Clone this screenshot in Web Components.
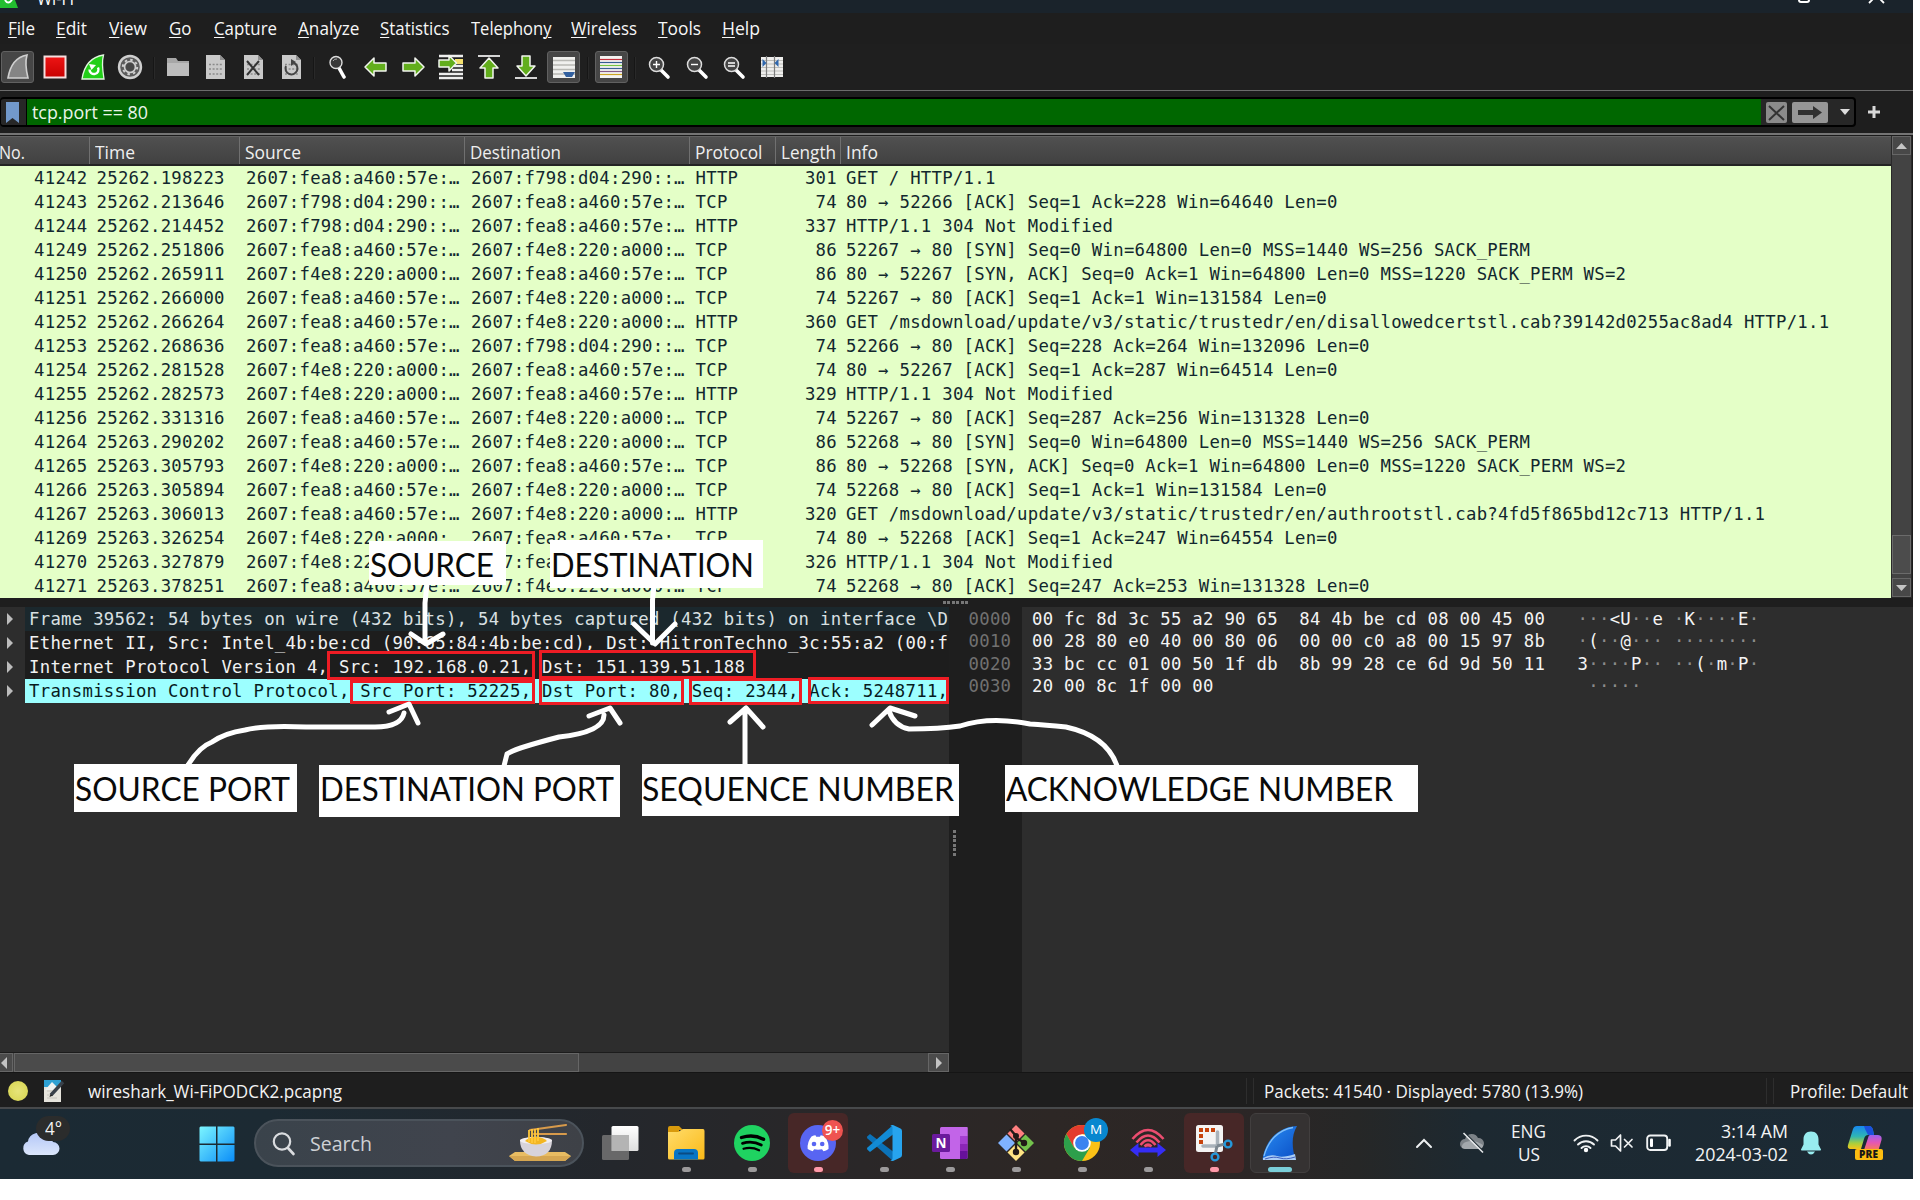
<!DOCTYPE html>
<html lang="en">
<head>
<meta charset="utf-8">
<title>Wi-Fi</title>
<style>
html,body{margin:0;padding:0;background:#fff}
body{width:1920px;height:1200px;overflow:hidden;font-family:"Open Sans","Noto Sans",sans-serif}
</style>
</head>
<body>
<ws-app></ws-app>
<script>
const define = (name, css, html, after) => customElements.define(name, class extends HTMLElement {
  connectedCallback() {
    if (this.shadowRoot) return;
    const root = this.attachShadow({mode: 'open'});
    const t = document.createElement('template');
    t.innerHTML = `<style>:host{display:block;box-sizing:border-box}*{box-sizing:border-box}${css}</style>` + (typeof html === 'function' ? html(this) : html);
    root.appendChild(t.content.cloneNode(true));
    if (after) after(this, root);
  }
});

/* Text squeezed or stretched horizontally to the width given in "w". */
define('fit-text', ':host{display:inline-block;white-space:nowrap;flex:none}span{display:inline-block;transform-origin:0 50%;white-space:pre}', '<span><slot></slot></span>', (el, root) => {
  const w = +el.getAttribute('w'), s = root.querySelector('span');
  el.style.width = w + 'px';
  const n = s.getBoundingClientRect().width;
  if (n) s.style.transform = `scaleX(${w / n})`;
});

const doc = inner => `<path d="M2 1h14l5 5v19H2z" fill="#c9c9c9"/><path d="M16 1v5h5z" fill="#909090"/><g fill="none" stroke="#8a8a8a" stroke-width="1.5" stroke-dasharray="2 1.6"><path d="M5 10.500h13M5 15h13M5 20h13"/></g>${inner}`;
const mag = s => `<path d="M14 15l7 7" stroke="#fff" stroke-width="3.600" stroke-linecap="round"/><circle cx="9.500" cy="9.500" r="7" fill="#454545" stroke="#dcdcdc" stroke-width="1.500"/><path d="${s}" stroke="#fff" stroke-width="1.400"/>`;
const GA = 'fill="#62ae1c" stroke="#f2f5ee" stroke-width="1.500" stroke-linejoin="round"';
const ICONS = {
  fin: [24,26,'<path d="M2 24C4 12 10 3 21 1c-2 7-1 15 1 23z" fill="#858585" stroke="#d0d0d0" stroke-width="1.600"/>'],
  stop: [24,24,'<defs><linearGradient id="r" x2="0" y2="1"><stop stop-color="#ee1515"/><stop offset="1" stop-color="#c80000"/></linearGradient></defs><rect x="1.500" y="1.500" width="21" height="21" fill="url(#r)" stroke="#f5dede" stroke-width="2"/>'],
  restart: [24,26,'<path d="M1 25C3 12 10 3 22.500 1c-2 7-1 15 .5 24z" fill="#22cf18" stroke="#e2f7df" stroke-width="1.300"/><path d="M8.500 15.500a4.500 4.500 0 1 0 8.500-2" fill="none" stroke="#fff" stroke-width="2.400"/><path d="M8 10l7 1-4.500 5z" fill="#fff"/>'],
  gear: [26,26,'<circle cx="13" cy="13" r="11" fill="#5c5c5c" stroke="#cfcfcf" stroke-width="2.400"/><circle cx="13" cy="13" r="5.500" fill="none" stroke="#cfcfcf" stroke-width="1.600"/><circle cx="13" cy="13" r="7.200" fill="none" stroke="#cfcfcf" stroke-width="2" stroke-dasharray="2.500 3.150"/><circle cx="13" cy="13" r="4" fill="#474747"/>'],
  folder: [24,20,'<path d="M1 1h9l2 3h11v15H1z" fill="#a7a7a7"/><path d="M1 6h22v13H1z" fill="#bdbdbd"/>'],
  doc: [22,26,doc('')],
  docx: [22,26,doc('<path d="M5 7l12 14M17 7L5 21" stroke="#333" stroke-width="2"/>')],
  docr: [22,26,doc('<path d="M6 12a6 6 0 1 0 8-3" fill="none" stroke="#444" stroke-width="2"/><path d="M11 5l5 3-5 4z" fill="#444"/>')],
  find: [20,25,'<path d="M11 13l5 9" stroke="#fff" stroke-width="3.600" stroke-linecap="round"/><circle cx="8" cy="7.500" r="6" fill="#383838" stroke="#ddd" stroke-width="1.400"/><path d="M5 6a4 4 0 0 1 4-2" stroke="#aaa" fill="none"/>'],
  left: [24,20,`<path d="M1 10L10 1v5h12v8H10v5z" ${GA}/>`],
  right: [24,20,`<path d="M23 10L14 1v5H2v8h12v5z" ${GA}/>`],
  goto: [26,26,`<path d="M1 2h24M1 20h24M1 24h24M14 16h11M16 12h9" stroke="#eee" stroke-width="2.400"/><path d="M17 5h8v5h-8z" fill="#f5e16e"/><path d="M18.500 9L11 1.500V6H1v7h10v4z" ${GA}/>`],
  up: [24,26,`<path d="M1 2h22" stroke="#d5d5d5" stroke-width="2"/><path d="M12 4l9 10h-5v10H8V14H3z" ${GA}/>`],
  down: [24,26,`<path d="M1 24h22" stroke="#d5d5d5" stroke-width="2"/><path d="M12 22l9-10h-5V2H8v10H3z" ${GA}/>`],
  scroll: [24,24,'<path d="M1 2h22v21H1z" fill="#f0f0ee"/><path d="M1 5.500h22M1 10h22M1 14.500h22M1 19h22" stroke="#b8b8b4" stroke-width="1.300"/><path d="M11 17h12l-3 5h-6z" fill="#32609f"/>'],
  color: [24,24,'<path d="M1 1h22v22H1z" fill="#f4f4f2"/><g stroke-width="1.200"><path d="M1 4.500h22" stroke="#c22f3c"/><path d="M1 7.500h22" stroke="#345b91"/><path d="M1 10.500h22" stroke="#76c442"/><path d="M1 13.500h22" stroke="#3b5f94"/><path d="M1 16.500h22" stroke="#855b87"/><path d="M1 19.500h22" stroke="#cda522"/></g>'],
  zin: [24,24,mag('M6 9.500h7M9.500 6v7')], zout: [24,24,mag('M6 9.500h7')], zeq: [24,24,mag('M6 8h7M6 11h7')],
  cols: [24,24,'<path d="M1 2h22v20H1z" fill="#eeeeec"/><path d="M1 5.500h22M1 9h22M1 12.500h22M1 16h22M1 19.500h22" stroke="#bebeba"/><path d="M6.500 1v22M14.500 1v22" stroke="#7d7d7d" stroke-width="1.200"/><path d="M2.500 4l4 4-4 4zM18.500 4l-4 4 4 4z" fill="#2f67ad"/>'],

  win: [36,36,'<defs><linearGradient id="w" x2="1" y2="1"><stop stop-color="#7cf6ff"/><stop offset="1" stop-color="#0a8df8"/></linearGradient></defs><path d="M1.500 .5H17v17H.5V1.500zM18.500 .5h16l1 1v16h-17zM.5 19H17v16.500H1.500l-1-1zM18.500 19h17v15.500l-1 1h-16z" fill="url(#w)"/>'],
  taskview: [38,36,'<defs><linearGradient id="t" x2="0" y2="1"><stop stop-color="#fff"/><stop offset="1" stop-color="#dedede"/></linearGradient></defs><rect x="10.500" y="1" width="27" height="25" rx="1.500" fill="url(#t)"/><rect x="1" y="10" width="27" height="25" rx="1.500" fill="#747474" opacity=".85"/><path d="M10.500 10H28v16H10.500z" fill="#b4b4b4"/>'],
  files: [38,36,'<defs><linearGradient id="f" x2="1" y2="1"><stop stop-color="#ffdc6b"/><stop offset="1" stop-color="#fbb917"/></linearGradient></defs><path d="M1 3q0-2 2-2h9l4 4h-4v5H1z" fill="#d99a0c"/><path d="M1 7h10l5-3h20q1.500 0 1.500 2v27q0 1.500-1.500 1.500H2.500Q1 34.500 1 33z" fill="url(#f)"/><path d="M7 34.500V28q0-4 4-4h16q4 0 4 4v6.500z" fill="#0875c5"/><path d="M12 28.500h14" stroke="#0a4b83" stroke-width="1.800" stroke-linecap="round"/>'],
  spotify: [36,36,'<circle cx="18" cy="18" r="18" fill="#1fd361"/><g fill="none" stroke="#000" stroke-linecap="round"><path d="M7.500 12.500q12-3.800 22 1.800" stroke-width="3.400"/><path d="M8.500 18.300q10-3 18.800 1.800" stroke-width="2.800"/><path d="M9.500 23.800q8-2.300 15.600 1.500" stroke-width="2.200"/></g>'],
  discord: [36,36,'<circle cx="18" cy="18" r="18" fill="#5865f2"/><path d="M11.500 11.500Q14 10.300 15.500 10.300L16.200 11.700H20L20.700 10.300Q23 10.500 25 11.600Q29 17.500 28.500 24Q26 25.700 23.500 26.300L22 24.200Q18 25.100 14.200 24.200L12.700 26.300Q10 25.600 7.700 24Q7 17 11.500 11.500z" fill="#fff"/><circle cx="14" cy="19" r="2.300" fill="#5865f2"/><circle cx="22.200" cy="19" r="2.300" fill="#5865f2"/>'],
  vscode: [36,36,'<path d="M1.500 11.200L4 9l23 17.500V36L1.500 13.500q-1.200-1.200 0-2.300z" fill="#0b72b8"/><path d="M1.500 24.800L4 27l23-17.500V0L1.500 22.500q-1.200 1.200 0 2.300z" fill="#128bd5"/><path d="M27 0l7.500 3.500Q36 4.200 36 6v24q0 1.800-1.500 2.500L27 36q-1.500.3-3-1.200 2 1 2.500-1.300V2.500Q26 .2 24 1.200 25.500-.3 27 0z" fill="#27a4ee"/>'],
  onenote: [36,34,'<rect x="8" y="1" width="27.500" height="32" rx="1.500" fill="#c264e8"/><path d="M28 1h7.500v9H28z" fill="#c46ae9"/><path d="M28 10h7.500v8H28z" fill="#a53fd0"/><path d="M28 18h7.500v7H28z" fill="#8b26b7"/><path d="M28 25h7.500v6.500q0 1.500-1.500 1.500h-6z" fill="#66119a"/><rect x="0" y="8" width="18" height="18" rx="1.500" fill="#6b1a9d"/><text x="9" y="22" text-anchor="middle" font-family="Open Sans" font-weight="700" font-size="13.500" fill="#fff">N</text>'],
  git: [38,38,'<path d="M19 1l8.500 8.500L19 18l-8.500-8.500z" fill="#ff8080"/><path d="M9.500 10.500L18 19l-8.500 8.500L1 19z" fill="#7fb2ff"/><path d="M28.500 10.500L37 19l-8.500 8.500L20 19z" fill="#73c24c"/><path d="M19 20l8.500 8.500L19 37l-8.500-8.500z" fill="#ffe484"/><path d="M13 5l6 7v16M19 14l9 5" stroke="#221a18" stroke-width="2.400" fill="none"/><g fill="#221a18"><circle cx="19" cy="12" r="3"/><circle cx="27" cy="19" r="3.200"/><circle cx="19" cy="28" r="3.200"/></g>'],
  chrome: [36,36,'<circle cx="18" cy="18" r="18" fill="#fbc116"/><path d="M2.400 9A18 18 0 0 1 33.600 9H18L10 22.500z" fill="#e33b2e"/><path d="M2.400 9A18 18 0 0 0 18 36l8-13.500H10z" fill="#2d9f4b"/><circle cx="18" cy="18" r="8.800" fill="#fff"/><circle cx="18" cy="18" r="6.900" fill="#3b83f0"/>'],
  cast: [36,28,'<g fill="none" stroke="#ec4d70" stroke-width="2.600"><path d="M2.500 10q15.500-18 31 0"/><path d="M6.500 13.500q11.500-14 23 0"/><path d="M10.500 16q7.500-9.500 15 0"/><path d="M14.500 17.500q3.500-3.500 7 0" fill="#ec4d70"/></g><path d="M0 21l8.500-7v4.500h19V14l8.500 7-8.500 7v-4.500h-19V28z" fill="#352df5"/>'],
  snip: [38,38,'<rect x="1" y="1" width="27" height="27" rx="2.500" fill="#f4f4f4"/><g fill="#c7430c"><path d="M4 4h4v4H4zM10 4h4v4h-4zM16 4h4v4h-4zM4 10h4v4H4zM4 16h4v4H4z"/></g><path d="M22.500 8v14M8 22h14" stroke="#a9b2ba" stroke-width="3.500" stroke-linecap="round"/><path d="M22 22l8-2M22 22l-1.500 7" stroke="#7c8790" stroke-width="3"/><circle cx="33" cy="20" r="3.400" fill="none" stroke="#2598da" stroke-width="2.400"/><circle cx="20" cy="33" r="3.400" fill="none" stroke="#2598da" stroke-width="2.400"/>'],
  shark: [36,36,'<defs><linearGradient id="s" x2="1" y2="1"><stop stop-color="#2a8df3"/><stop offset="1" stop-color="#0a4fc6"/></linearGradient></defs><path d="M.5 34.500C3 18 14 2 35 1c-6 10-5 22-1.500 34z" fill="url(#s)"/><path d="M2 31C6 16 16 5 31 2.500" stroke="#7fc0fa" stroke-width="1.300" fill="none"/><path d="M1 33q8-4 14-2t18-2l1 6H1z" fill="#a9cdf6"/><path d="M3 34q9-3 15-1t15-1" stroke="#3d5fc0" fill="none"/>'],

  weather: [38,26,'<defs><linearGradient id="c" x2="0" y2="1"><stop stop-color="#b4c7f7"/><stop offset="1" stop-color="#dbe6fb"/></linearGradient></defs><path d="M7 24a7 7 0 0 1-1-13.500A10 10 0 0 1 24 6a8 8 0 0 1 7 5 6.500 6.500 0 0 1 0 13z" fill="url(#c)"/>'],
  search: [24,24,'<circle cx="10" cy="10.500" r="8.200" fill="none" stroke="#dadcdf" stroke-width="2.200"/><path d="M16 17l5.500 6" stroke="#dadcdf" stroke-width="2.600" stroke-linecap="round"/>'],
  bowl: [64,38,'<path d="M7 28h50l6 4-6 5H7l-6-5z" fill="#e8bc62"/><path d="M1 32h62l-6 5H7z" fill="#d5a651"/><path d="M22 6L58 1M26 10h32" stroke="#d79a4b" stroke-width="2.200" stroke-linecap="round"/><path d="M12 16q16-7 32 0 0 16-16 16.500Q12 31 12 16z" fill="#d7d3da"/><ellipse cx="28" cy="16.500" rx="16" ry="3.500" fill="#f1eef1"/><path d="M17 17q11 7 22 0-4-4-11-4t-11 4z" fill="#f3b623"/><path d="M21 6v12M24 5v14M27 5v14M30 4v13" stroke="#ffc83a" stroke-width="1.800"/>'],
  chev: [18,12,'<path d="M2 10l7-7 7 7" fill="none" stroke="#eef0f2" stroke-width="2" stroke-linecap="round"/>'],
  cloudoff: [26,22,'<path d="M6 17a5 5 0 0 1 0-10 7 7 0 0 1 13-1 5.500 5.500 0 0 1 1 11z" fill="#7d8388"/><path d="M3 16a5 5 0 0 1 4-6q8-3 17 3 0 4-4 4H6z" fill="#a3a8ac"/><path d="M5.500 .5l19.500 19.500" stroke="#1d2930" stroke-width="1.500"/><path d="M4.500 1l19.500 19.500" stroke="#e6e8ea" stroke-width="1.600"/>'],
  wifi: [26,20,'<g fill="none" stroke="#f0f2f3" stroke-width="1.900" stroke-linecap="round"><path d="M1.500 7.500a16 16 0 0 1 23 0"/><path d="M5 11.500a11.300 11.300 0 0 1 16 0"/><path d="M8.500 15a6.300 6.300 0 0 1 9 0"/></g><circle cx="13" cy="17" r="2.200" fill="#fff"/>'],
  mute: [24,20,'<path d="M1.500 7h4l5-5v16l-5-5h-4z" fill="none" stroke="#f0f2f3" stroke-width="1.700" stroke-linejoin="round"/><path d="M14.500 6.500l7.500 7.500M22 6.500L14.500 14" stroke="#f0f2f3" stroke-width="1.700" stroke-linecap="round"/>'],
  batt: [26,18,'<rect x="1.200" y="1.500" width="20" height="14.500" rx="3" fill="none" stroke="#f0f2f3" stroke-width="1.900"/><rect x="4" y="4.500" width="3" height="8.500" rx="1" fill="#fff"/><path d="M23.500 6v5.500" stroke="#fff" stroke-width="2.600" stroke-linecap="round"/>'],
  bell: [22,24,'<path d="M11 .5c5 0 7.500 3.500 7.500 8v5l2.500 5q.4 1-1 1H2q-1.400 0-1-1l2.500-5v-5c0-4.500 2.500-8 7.500-8z" fill="#98ecef"/><path d="M7 20.500h8q-1.500 3-4 3t-4-3z" fill="#98ecef"/>'],
  copilot: [36,36,'<defs><linearGradient id="a" x2="0" y2="1"><stop stop-color="#1787ef"/><stop offset=".45" stop-color="#2fb6b4"/><stop offset=".75" stop-color="#a8cf3e"/><stop offset="1" stop-color="#f5c518"/></linearGradient><linearGradient id="b" x2="0" y2="1"><stop stop-color="#9a62f0"/><stop offset=".5" stop-color="#e456b4"/><stop offset="1" stop-color="#fb7a54"/></linearGradient></defs><path d="M10 1h12q3 0 4 4l1 5h-6q-3 0-4 4l-3 10H3q-3-.5-2-4L6 4q1-3 4-3z" fill="url(#a)"/><path d="M17 1h5q3 0 4 4l1 5h-6l-3-6z" fill="#1b50dc"/><path d="M23 10h8q4.500.5 3.500 5l-3 10H17l4-12q.5-3 2-3z" fill="url(#b)"/>'],
  capfile: [22,24,'<path d="M1 3h17v20H1z" fill="#e6e4dc"/><path d="M1 1h17v7H1z" fill="#2ea1d4"/><path d="M2 11l7-8 8 8z" fill="#eef2f2"/><path d="M4 12h8M4 16h6M4 19h10" stroke="#c6c4bc"/><path d="M8 16L20 3" stroke="#39414a" stroke-width="3.400"/><path d="M6.500 18l1-3 2 1.800z" fill="#222"/>']
};
define('ws-icon', ':host{display:block;flex:none;line-height:0}svg{display:block;overflow:visible}', el => {
  const [w, h, s] = ICONS[el.getAttribute('name')];
  return `<svg width="${w}" height="${h}" viewBox="0 0 ${w} ${h}">${s}</svg>`;
});

define('title-bar', ':host{height:13px;overflow:hidden;background:#1a232b;position:relative;color:#fff;font-size:18px;line-height:20px}.i,.t,.m,.x{position:absolute}.i{left:0;top:0}.t{left:28px;top:-12px}.m{left:1798px;top:-10px;width:12px;height:13px;border:2px solid #fff;border-radius:3px}.x{left:1868px;top:-13px}',
 '<svg class="i" width="20" height="9"><path d="M0 0h15l3 8H0z" fill="#22bd2f"/><path d="M5 0q3 5 7 0" stroke="#fff" stroke-width="2" fill="none"/></svg><div class="t"><fit-text w="46">*Wi-Fi</fit-text></div><div class="m"></div><svg class="x" width="17" height="17"><path d="M1 1l15 15M16 1L1 16" stroke="#fff" stroke-width="1.800"/></svg>');

define('menu-bar', ':host{display:flex;height:31px;align-items:center;padding-left:8px;background:#1e1e1e;color:#f7f7f7;font-size:17.5px;line-height:31px}u{text-underline-offset:2px;text-decoration-thickness:1px}div{flex:none}', () => {
  const m = [['<u>F</u>ile',27,48],['<u>E</u>dit',31,53],['<u>V</u>iew',38,60],['<u>G</u>o',22.500,44.500],['<u>C</u>apture',63,84],['<u>A</u>nalyze',61.500,82.500],['<u>S</u>tatistics',69.500,90.500],['Telephon<u>y</u>',80.500,100.500],['<u>W</u>ireless',66,87],['<u>T</u>ools',43,63.500],['<u>H</u>elp',38,60]];
  return m.map(a => `<div style="width:${a[2]}px"><fit-text w="${a[1]}">${a[0]}</fit-text></div>`).join('');
});

define('tool-button', ':host{display:flex;width:37.600px;height:34px;flex:none;justify-content:center}div{width:33px;height:32px;display:flex;align-items:center;justify-content:center;border:1px solid transparent;border-radius:3px}:host([on]) div{background:#464646;border-color:#616161}', el => `<div><ws-icon name="${el.getAttribute('icon')}"></ws-icon></div>`);
define('tool-bar', ':host{display:flex;height:46px;align-items:center;padding:2px 0 0 0;background:#1f1f1f}tool-button:first-of-type{margin-left:-1.300px}i{width:10px;height:22px;flex:none;background:linear-gradient(90deg,transparent 4px,#161616 4px,#161616 5px,#292929 5px,#292929 6px,transparent 6px)}',
 () => ['fin!','stop','restart','gear','|','folder','doc','docx','docr','|','find','left','right','goto','up','down','scroll!','|','color!','|','zin','zout','zeq','cols'].map(n => n === '|' ? '<i></i>' : `<tool-button icon="${n.replace('!','')}"${n.endsWith('!') ? ' on' : ''}></tool-button>`).join(''));

define('filter-bar', `:host{display:flex;height:45px;padding:6px 0 5px;background:#1e1e1e;border-top:1px solid #6c6c6c;border-bottom:2px solid #747474}
.f{width:1856px;height:30px;border:2px solid #000;border-left-width:1px;border-radius:4px;display:flex;background:#272727}.b{width:26px;padding:3px 0 0 5px;border-right:1px solid #000}.g{width:1734px;background:#006700;color:#eaf4ea;font-size:17.500px;line-height:26px;padding-left:5px}.e{display:flex;align-items:center;gap:5px;padding-left:5px}.s{width:21px;height:21px;border-radius:2px;background:#8b8b8b}.a{width:36px;height:21px;border-radius:2px;background:#969696}svg{display:block}.p{padding:9px 0 0 12px}.c{margin-left:7px}`,
 '<div class="f"><div class="b"><svg width="14" height="21"><path d="M0 0h13v21l-6.500-5L0 21z" fill="#7299cb"/></svg></div><div class="g"><fit-text w="116">tcp.port == 80</fit-text></div><div class="e"><div class="s"><svg width="21" height="21"><path d="M3 4l15 14M18 4L3 18" stroke="#333" stroke-width="2"/></svg></div><div class="a"><svg width="36" height="21"><path d="M6 8h15V4l9 6.500-9 6.500v-4H6z" fill="#303030"/></svg></div><svg class="c" width="10" height="6"><path d="M0 0h10L5 6z" fill="#ddd"/></svg></div></div><div class="p"><svg width="12" height="12"><path d="M6 0v12M0 6h12" stroke="#d8d8d8" stroke-width="3"/></svg></div>');

const A = '2607:fea8:a460:57e:…', B = '2607:f798:d04:290::…', C = '2607:f4e8:220:a000:…';
const PACKETS = [
 [41242,'25262.198223',A,B,'HTTP',301,'GET / HTTP/1.1'],
 [41243,'25262.213646',B,A,'TCP',74,'80 → 52266 [ACK] Seq=1 Ack=228 Win=64640 Len=0'],
 [41244,'25262.214452',B,A,'HTTP',337,'HTTP/1.1 304 Not Modified'],
 [41249,'25262.251806',A,C,'TCP',86,'52267 → 80 [SYN] Seq=0 Win=64800 Len=0 MSS=1440 WS=256 SACK_PERM'],
 [41250,'25262.265911',C,A,'TCP',86,'80 → 52267 [SYN, ACK] Seq=0 Ack=1 Win=64800 Len=0 MSS=1220 SACK_PERM WS=2'],
 [41251,'25262.266000',A,C,'TCP',74,'52267 → 80 [ACK] Seq=1 Ack=1 Win=131584 Len=0'],
 [41252,'25262.266264',A,C,'HTTP',360,'GET /msdownload/update/v3/static/trustedr/en/disallowedcertstl.cab?39142d0255ac8ad4 HTTP/1.1'],
 [41253,'25262.268636',A,B,'TCP',74,'52266 → 80 [ACK] Seq=228 Ack=264 Win=132096 Len=0'],
 [41254,'25262.281528',C,A,'TCP',74,'80 → 52267 [ACK] Seq=1 Ack=287 Win=64514 Len=0'],
 [41255,'25262.282573',C,A,'HTTP',329,'HTTP/1.1 304 Not Modified'],
 [41256,'25262.331316',A,C,'TCP',74,'52267 → 80 [ACK] Seq=287 Ack=256 Win=131328 Len=0'],
 [41264,'25263.290202',A,C,'TCP',86,'52268 → 80 [SYN] Seq=0 Win=64800 Len=0 MSS=1440 WS=256 SACK_PERM'],
 [41265,'25263.305793',C,A,'TCP',86,'80 → 52268 [SYN, ACK] Seq=0 Ack=1 Win=64800 Len=0 MSS=1220 SACK_PERM WS=2'],
 [41266,'25263.305894',A,C,'TCP',74,'52268 → 80 [ACK] Seq=1 Ack=1 Win=131584 Len=0'],
 [41267,'25263.306013',A,C,'HTTP',320,'GET /msdownload/update/v3/static/trustedr/en/authrootstl.cab?4fd5f865bd12c713 HTTP/1.1'],
 [41269,'25263.326254',C,A,'TCP',74,'80 → 52268 [ACK] Seq=1 Ack=247 Win=64554 Len=0'],
 [41270,'25263.327879',C,A,'HTTP',326,'HTTP/1.1 304 Not Modified'],
 [41271,'25263.378251',A,C,'TCP',74,'52268 → 80 [ACK] Seq=247 Ack=253 Win=131328 Len=0']];
const MONO = 'font-family:"DejaVu Sans Mono","Liberation Mono",monospace;font-size:17.300px;letter-spacing:.285px;white-space:pre;';
const GRID = 'display:grid;grid-template-columns:87.500px 9px 149.500px 225px 224.500px 85.500px 56px 9px 1fr;';

define('packet-row', `:host{${GRID}height:24px;line-height:24px;overflow:hidden}.r{text-align:right}`, el => {
  const p = PACKETS[+el.getAttribute('index')];
  return `<span class="r">${p[0]}</span><span></span><span>${p[1]}</span><span>${p[2]}</span><span>${p[3]}</span><span>${p[4]}</span><span class="r">${p[5]}</span><span></span><span>${p[6]}</span>`;
});
define('packet-list', `:host{display:flex;height:463px;background:#1b1b1b;padding-top:1px}.l{width:1891px}.h{display:flex;height:30px;background:linear-gradient(#505050,#414141);border-top:1px solid #626262;border-bottom:2px solid #242424;color:#efefef;font-size:17.500px;line-height:30px}.h div{border-right:1px solid #707070;padding-left:5px;flex:none}.h div:last-child{border:0}.h div:first-child{padding:0}
.rows{background:#e4ffc7;color:#12272e;${MONO}}.s{width:21px;background:#434343;border:1px solid #2a2a2a;border-top:0;display:flex;flex-direction:column;align-items:center}.b{width:19px;height:19px;border:1px solid #666;background:#484848;display:flex;align-items:center;justify-content:center}.k{height:380px}.t{width:19px;height:39px;background:#4c4c4c;border:1px solid #6b6b6b;margin-bottom:auto}`,
 () => '<div class="l"><div class="h">' + [['No.',26,90],['Time',40,149.500],['Source',56,225],['Destination',91,225.500],['Protocol',67.500,85.500],['Length',55,65.500],['Info',32,400]].map((c,i) => `<div style="width:${c[2]}px"><fit-text w="${c[1]}"${i ? '' : ' style="margin-left:-1px"'}>${c[0]}</fit-text></div>`).join('') + '</div><div class="rows">' + PACKETS.map((_, i) => `<packet-row index="${i}"></packet-row>`).join('') + '</div></div><div class="s"><div class="b"><svg width="11" height="6"><path d="M0 6h11L5.500 0z" fill="#c4c4c4"/></svg></div><div class="k"></div><div class="t"></div><div class="b"><svg width="11" height="6"><path d="M0 0h11L5.500 6z" fill="#c4c4c4"/></svg></div></div>');

define('detail-row', `:host{display:flex;height:24px;color:#f2f2f2;${MONO}line-height:24px}.a{width:25px;flex:none;padding:6px 0 0 7px;background:#2d2d2d}.t{flex:1;background:#1d1d1d;padding-left:4px;overflow:hidden}:host([kind=frame]) .t{background:#1b282d;color:#d9e0e2}:host([kind=sel]) .t{background:#9cffff;color:#071c1e}svg{display:block}`,
 '<div class="a"><svg width="7" height="12"><path d="M0 0l6 6-6 6z" fill="#bcbcbc"/></svg></div><div class="t"><slot></slot></div>');
define('detail-tree', ':host{width:949px;height:465px;background:#2d2d2d;display:flex;flex-direction:column}.sb{margin-top:auto;height:20px;display:flex;background:#434343;border-top:1px solid #1c1c1c}.sb div{border:1px solid #666;background:#4b4b4b;display:flex;align-items:center}.l{width:13px;margin-right:1px;border-left:0!important;padding-left:1px}.th{width:565px}.r{width:21px;margin-left:auto;justify-content:center}',
 '<detail-row kind="frame">Frame 39562: 54 bytes on wire (432 bits), 54 bytes captured (432 bits) on interface \\D</detail-row><detail-row>Ethernet II, Src: Intel_4b:be:cd (90:65:84:4b:be:cd), Dst: HitronTechno_3c:55:a2 (00:f</detail-row><detail-row>Internet Protocol Version 4, Src: 192.168.0.21, Dst: 151.139.51.188</detail-row><detail-row kind="sel">Transmission Control Protocol, Src Port: 52225, Dst Port: 80, Seq: 2344, Ack: 5248711,</detail-row><div class="sb"><div class="l"><svg width="6" height="12"><path d="M6 0v12L0 6z" fill="#c4c4c4"/></svg></div><div class="th"></div><div class="r"><svg width="6" height="12"><path d="M0 0v12l6-6z" fill="#c4c4c4"/></svg></div></div>');

define('hex-view', `:host{display:flex;flex:1;height:465px;${MONO}line-height:22.300px;color:#f4f4f4}.o{width:66px;background:#1e1e1e;color:#717171;padding:1px 0 0 12.500px}.d{flex:1;background:#2d2d2d;padding:1px 0 0 10px;display:flex;gap:32px}.b{width:513.600px}i{font-style:normal;color:#8b8b8b}`, () => {
  const a = ['···<U··e ·K····E·','·(··@··· ········','3····P·· ··(·m·P·',' ·····'].map(s => s.replace(/</g,'&lt;').replace(/·+/g, m => `<i>${m}</i>`));
  return `<div class="o"><div>0000</div><div>0010</div><div>0020</div><div>0030</div></div><div class="d"><div class="b"><div>00 fc 8d 3c 55 a2 90 65  84 4b be cd 08 00 45 00</div><div>00 28 80 e0 40 00 80 06  00 00 c0 a8 00 15 97 8b</div><div>33 bc cc 01 00 50 1f db  8b 99 28 ce 6d 9d 50 11</div><div>20 00 8c 1f 00 00</div></div><div>${a.map(s => `<div>${s}</div>`).join('')}</div></div>`;
});
define('split-panes', ':host{display:flex;flex-direction:column;height:474px;background:#1e1e1e}.h{height:9px;padding:3px 0 0 943px}.h i{display:block;width:27px;height:3px;background:repeating-linear-gradient(90deg,#777 0 3px,transparent 3px 4.500px)}.p{display:flex}.v{width:7px;padding:223px 0 0 4px}.v i{display:block;width:3px;height:27px;background:repeating-linear-gradient(#777 0 3px,transparent 3px 4.500px)}',
 '<div class="h"><i></i></div><div class="p"><detail-tree></detail-tree><div class="v"><i></i></div><hex-view></hex-view></div>');

define('status-bar', ':host{display:flex;height:37px;align-items:center;background:#1e1e1e;border-bottom:2px solid #47494b;border-top:1px solid #151515;color:#f3f3f3;font-size:17.500px;line-height:34px;padding:1px 0 0 8px}.y{width:20px;height:20px;border-radius:50%;background:radial-gradient(#e6e47a,#d6d44d);margin-right:15px}ws-icon{margin-right:22.500px}.s{width:8px;height:26px;border:1px solid #2e2e2e;border-width:0 1px}.a{margin-left:904px;margin-right:10px}.b{margin-left:183px;margin-right:16.500px}',
 '<div class="y"></div><ws-icon name="capfile"></ws-icon><fit-text w="254">wireshark_Wi-FiPODCK2.pcapng</fit-text><div class="s a"></div><fit-text w="319">Packets: 41540 · Displayed: 5780 (13.9%)</fit-text><div class="s b"></div><fit-text w="118">Profile: Default</fit-text>');

define('task-tile', ':host{width:60px;height:60px;display:flex;flex:none;flex-direction:column;align-items:center;position:relative;border-radius:6px}:host([hot]){background:#472727}:host([active]){background:#353232;border:1px solid #423f3f}.i{height:36px;margin-top:12px;display:flex;align-items:center}:host([active]) .i{margin-top:11px}.d{width:9px;height:5px;border-radius:3px;background:#9c9a9b;margin-top:6px}:host([hot]) .d{background:#ff9aa9}:host([active]) .d{width:24px;background:#7acfd9}:host([bare]) .d{display:none}.b{position:absolute;display:flex;align-items:center;justify-content:center;border-radius:50%;color:#fff;font-size:13.500px;line-height:1;font-weight:600}.red{width:21px;height:21px;background:#ef5350;left:34px;top:7px}.blue{width:24px;height:24px;background:#0887cf;left:32px;top:5px;font-weight:400}',
 el => `<div class="i"><ws-icon name="${el.getAttribute('icon')}"></ws-icon></div><div class="d"></div>${el.hasAttribute('badge') ? `<div class="b ${el.getAttribute('tone')}">${el.getAttribute('badge')}</div>` : ''}`);

define('search-box', ':host{display:flex;width:330px;height:48px;border-radius:24px;border:2px solid #4b535b;background:linear-gradient(90deg,#3a434b,#40444d 60%,#3e4147);align-items:center;padding:0 10px 0 16px;color:#ced1d5;font-size:19.500px}fit-text{margin:0 0 0 13.500px}.b{margin-left:auto}', '<ws-icon name="search"></ws-icon><fit-text w="62">Search</fit-text><ws-icon class="b" name="bowl"></ws-icon>');

define('task-bar', `:host{display:flex;height:70px;padding-top:4px;background:linear-gradient(90deg,#1b2a34 0,#1c2a33 14%,#24272c 32%,#2a2728 45%,#2d2725 55%,#2b2626 66%,#262727 71%,#1d2931 77%,#1b2a35);color:#f3f4f5;font-size:17.500px}.w{width:198.500px;height:60px;padding:18px 0 0 21.500px;position:relative}.p{position:absolute;left:36px;top:3px;width:34px;height:25px;border-radius:13px;background:#2b2c2c;padding-left:9px;line-height:25px}.win{margin:13px 19.500px 0 0}search-box{margin:6px 6px 0 0}.tiles{display:flex;gap:6px}.tray{display:flex;height:60px;align-items:center;margin-left:105px}.tray>*{flex:none}.lang{width:35px;text-align:center;line-height:23px;margin-left:26px;display:flex;flex-direction:column;align-items:center}.time{display:flex;flex-direction:column;align-items:flex-end;line-height:23px;width:94px}.co{position:relative;height:36px;margin-left:25px}.pre{position:absolute;left:8px;top:24px;width:28px;height:11px;border-radius:2px;background:#fdbd10;color:#171717;font-size:10px;font-weight:800;line-height:11px;text-align:center;letter-spacing:.2px}`,
 `<div class="w"><ws-icon name="weather"></ws-icon><div class="p"><fit-text w="17">4°</fit-text></div></div><ws-icon class="win" name="win"></ws-icon><search-box></search-box><div class="tiles"><task-tile icon="taskview" bare></task-tile><task-tile icon="files"></task-tile><task-tile icon="spotify"></task-tile><task-tile icon="discord" hot badge="9+" tone="red"></task-tile><task-tile icon="vscode"></task-tile><task-tile icon="onenote"></task-tile><task-tile icon="git"></task-tile><task-tile icon="chrome" badge="M" tone="blue"></task-tile><task-tile icon="cast"></task-tile><task-tile icon="snip" hot></task-tile><task-tile icon="shark" active></task-tile></div>
<div class="tray"><ws-icon name="chev"></ws-icon><ws-icon name="cloudoff" style="margin-left:26px"></ws-icon><div class="lang"><fit-text w="35">ENG</fit-text><fit-text w="22">US</fit-text></div><ws-icon name="wifi" style="margin-left:27px"></ws-icon><ws-icon name="mute" style="margin-left:10.500px"></ws-icon><ws-icon name="batt" style="margin-left:12px"></ws-icon><div class="time" style="margin-left:22px"><fit-text w="67">3:14 AM</fit-text><fit-text w="93">2024-03-02</fit-text></div><ws-icon name="bell" style="margin-left:12px"></ws-icon><div class="co"><ws-icon name="copilot"></ws-icon><div class="pre">PRE</div></div></div>`);

/* A call-out box pinned on the window. */
define('note-label', ':host{position:absolute;background:#fff;color:#0a0a0a;font-family:Lato,"Open Sans",sans-serif;font-size:33px;white-space:nowrap}', '<slot></slot>', (el) => {
  const [x, y, w, h, p, lh] = el.getAttribute('box').split(' ').map(Number);
  el.style.cssText = `left:${x}px;top:${y}px;width:${w}px;height:${h}px;padding-left:${p}px;line-height:${lh}px`;
});
define('note-layer', ':host{position:absolute;left:0;top:0;width:1913px;height:1179px}svg{position:absolute;left:0;top:0}',
 `<svg width="1913" height="1179" fill="none"><g stroke="#ee1c24" stroke-width="3"><path d="M328.500 652.500h205v26h-205zM540.500 651.500h214v26h-214zM351.500 681.500h182v21h-182zM540.500 679.500h142v24h-142zM690.500 679.500h110v24h-110zM809.500 678.500h138v24h-138z"/></g>
<g stroke="#fff" stroke-width="5" stroke-linecap="round" stroke-linejoin="round"><path d="M427 584L425 603V643M411 634L426 644L443 634M654 586L652.500 600V643M634 624L655 644L675 624"/><path d="M188 765Q199 747 212 742Q225 733 245 730Q265 725 306 727H375Q401 727 404 713M389 712L409 704L418 723"/><path d="M504 766L507 754Q513 749 559 737Q604 732 604 715M589 716L610 708L620 723"/><path d="M745 765V710M730 722L746 708L763 727"/><path d="M1117 766Q1107 736 1066 727Q1045 725 1030 724Q990 716 960 726Q940 729 909 729Q894 726 889 711M872 725L890 708L915 716"/></g></svg>
<note-label box="369 541 137 44 1 47"><fit-text w="124">SOURCE</fit-text></note-label><note-label box="550 540 213 48 1 48"><fit-text w="203">DESTINATION</fit-text></note-label><note-label box="74 764 223 48 1 48"><fit-text w="215">SOURCE PORT</fit-text></note-label><note-label box="319 765 301 52 1 47"><fit-text w="294">DESTINATION PORT</fit-text></note-label><note-label box="642 764 317 52 0 48"><fit-text w="312">SEQUENCE NUMBER</fit-text></note-label><note-label box="1005 765 413 47 1 47"><fit-text w="387">ACKNOWLEDGE NUMBER</fit-text></note-label>`);

define('ws-app', ':host{position:relative;width:1913px;height:1179px;overflow:hidden;background:#1e1e1e}', '<title-bar></title-bar><menu-bar></menu-bar><tool-bar></tool-bar><filter-bar></filter-bar><packet-list></packet-list><split-panes></split-panes><status-bar></status-bar><task-bar></task-bar><note-layer></note-layer>');
</script>
</body>
</html>
